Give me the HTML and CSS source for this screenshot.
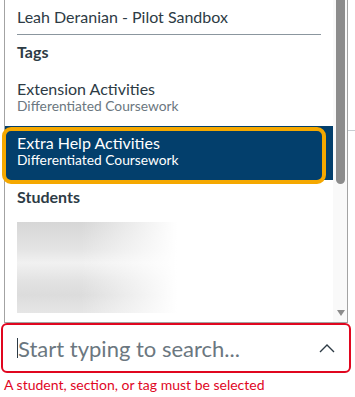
FILE: index.html
```html
<!DOCTYPE html>
<html lang="en">
<head>
    <title>Send To</title>
    <link rel="stylesheet" href="styles.css">
</head>
<body>
    <div class="top">
        <div class="listbox">
            <div class="options">
                <div class="option plain">Leah Deranian - Pilot Sandbox</div>
                <div class="separator"></div>
                <div class="group-label">Tags</div>
                <div class="option">
                    <div class="title">Extension Activities</div>
                    <div class="sub">Differentiated Coursework</div>
                </div>
                <div class="option selected">
                    <div class="title">Extra Help Activities</div>
                    <div class="sub">Differentiated Coursework</div>
                    <span class="focus-ring"></span>
                </div>
                <div class="group-label">Students</div>
                <div class="blurred"></div>
            </div>
            <div class="scrollbar">
                <div class="thumb"></div>
                <div class="arrow-down"></div>
            </div>
        </div>
        <div class="page-edge"></div>
    </div>
    <div class="search error">
        <span class="caret"></span>
        <span class="placeholder">Start typing to search...</span>
        <svg class="chevron" width="16" height="10" viewBox="0 0 16 10">
            <polyline points="1,9 8,2 15,9" fill="none" stroke="#2d3b45" stroke-width="1.4"/>
        </svg>
    </div>
    <div class="error-text">A student, section, or tag must be selected</div>
</body>
</html>
```

FILE: styles.css
```css
body {
    margin: 0;
    width: 355px;
    height: 397px;
    overflow: hidden;
    background: #fff;
    font-family: Lato, "Noto Sans", sans-serif;
    color: #2d3b45;
}

.top {
    display: flex;
}

.listbox {
    display: flex;
    margin-left: 4px;
    width: 344px;
    height: 323px;
    box-sizing: border-box;
    border: 1px solid #a3a3a3;
    border-top: none;
    background: #fff;
}

.options {
    width: 328px;
}

.option {
    position: relative;
    padding: 7px 12px 12px;
    height: 54px;
    box-sizing: border-box;
}

.option.plain {
    height: auto;
    padding: 7px 12px 0;
    font-size: 16px;
    line-height: 20px;
}

.title {
    font-size: 16px;
    line-height: 19px;
}

.sub {
    font-size: 13.8px;
    line-height: 16px;
    color: #6b7780;
}

.separator {
    height: 1px;
    margin: 7px 12px 0;
    background: #8b969e;
}

.group-label {
    padding: 7px 12px 10px;
    font-size: 16px;
    line-height: 20px;
    font-weight: bold;
}

.option.selected {
    background: #033f6c;
    color: #fff;
}

.option.selected .sub {
    color: #fff;
}

.focus-ring {
    position: absolute;
    left: -3px;
    top: 1px;
    width: 324px;
    height: 57px;
    box-sizing: border-box;
    border: 4px solid #f5a800;
    border-radius: 9px;
}

.blurred {
    margin: 5px 0 0 12px;
    width: 160px;
    height: 91px;
    background:
        linear-gradient(to right, rgba(255,255,255,0) 40%, #fff 100%),
        linear-gradient(to bottom, #d6d6d6 0%, #e4e4e4 30%, #f1f1f1 45%, #e2e2e2 65%, #dcdcdc 80%, #e6e6e6 100%);
}

.scrollbar {
    position: relative;
    width: 14px;
    background: #f9f9f9;
}

.thumb {
    margin-left: 3px;
    width: 9px;
    height: 184px;
    background: #8c8c8c;
    border-radius: 0 0 5px 5px;
}

.arrow-down {
    position: absolute;
    left: 4px;
    bottom: 6px;
    width: 0;
    height: 0;
    border-left: 4px solid transparent;
    border-right: 4px solid transparent;
    border-top: 6px solid #8c8c8c;
}

.page-edge {
    flex: 1;
    margin-top: 130px;
    height: 1px;
    background: #c7cdd1;
}

.search {
    display: flex;
    align-items: center;
    margin-left: 1px;
    width: 350px;
    height: 50px;
    box-sizing: border-box;
    border: 2px solid #e0061f;
    border-radius: 6px;
    padding: 0 14px 0 14px;
}

.caret {
    width: 1px;
    height: 20px;
    background: #2d3b45;
}

.placeholder {
    flex: 1;
    font-size: 22px;
    color: #6b7780;
}

.chevron {
    display: block;
}

.error-text {
    margin-top: 4px;
    padding-left: 4px;
    font-size: 14px;
    line-height: 16px;
    color: #e0061f;
}
```
